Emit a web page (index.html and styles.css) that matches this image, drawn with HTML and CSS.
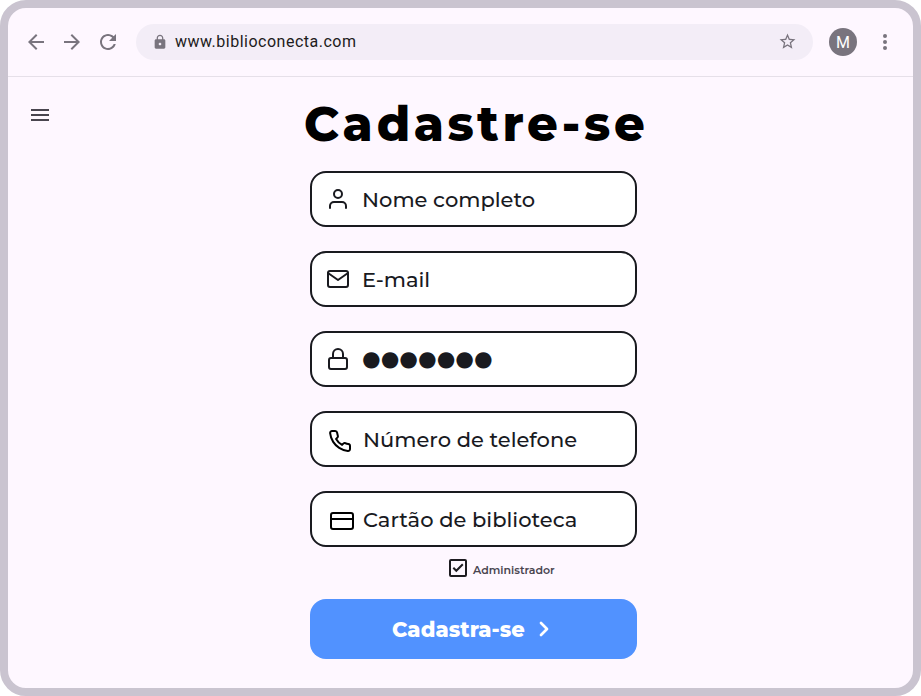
FILE: index.html
```html
<!DOCTYPE html>
<html lang="pt-BR">
<head>
<meta charset="utf-8">
<title>Cadastre-se</title>
<link rel="stylesheet" href="styles.css">
</head>
<body>
<div class="browser">
  <header class="toolbar">
    <svg class="nav" viewBox="0 0 24 24"><path d="M20 11H7.83l5.59-5.59L12 4l-8 8 8 8 1.41-1.41L7.83 13H20v-2z"/></svg>
    <svg class="nav" viewBox="0 0 24 24"><path d="M12 4l-1.41 1.41L16.17 11H4v2h12.17l-5.58 5.59L12 20l8-8z"/></svg>
    <svg class="nav" viewBox="0 0 24 24"><path d="M17.65 6.35C16.2 4.9 14.21 4 12 4c-4.42 0-7.99 3.58-7.99 8s3.57 8 7.99 8c3.73 0 6.84-2.55 7.73-6h-2.08c-.82 2.33-3.04 4-5.65 4-3.31 0-6-2.69-6-6s2.69-6 6-6c1.66 0 3.14.69 4.22 1.78L13 11h7V4l-2.35 2.35z"/></svg>
    <div class="address">
      <svg class="secure" viewBox="0 0 24 24"><path d="M18 8h-1V6c0-2.76-2.24-5-5-5S7 3.240 7 6v2H6c-1.100 0-2 .9-2 2v10c0 1.100.9 2 2 2h12c1.100 0 2-.9 2-2V10c0-1.100-.9-2-2-2zm-6 9c-1.100 0-2-.9-2-2s.9-2 2-2 2 .9 2 2-.9 2-2 2zm3.100-9H8.900V6c0-1.710 1.390-3.100 3.100-3.100s3.100 1.390 3.100 3.100v2z"/></svg>
      <span class="url">www.biblioconecta.com</span>
      <svg class="star" viewBox="0 0 24 24"><path d="M22 9.240l-7.190-.62L12 2 9.190 8.630 2 9.240l5.460 4.730L5.820 21 12 17.270 18.180 21l-1.630-7.030L22 9.240zM12 15.400l-3.760 2.270 1-4.280-3.320-2.880 4.380-.38L12 6.100l1.710 4.040 4.380.38-3.320 2.880 1 4.280L12 15.400z"/></svg>
    </div>
    <div class="avatar">M</div>
    <svg class="more" viewBox="0 0 24 24"><circle cx="12" cy="6" r="2"/><circle cx="12" cy="12" r="2"/><circle cx="12" cy="18" r="2"/></svg>
  </header>
  <main class="page">
    <svg class="menu" viewBox="0 0 24 24"><path d="M3 18h18v-2H3v2zm0-5h18v-2H3v2zm0-7v2h18V6H3z"/></svg>
    <form class="form">
      <h1><span class="title">Cadastre-se</span></h1>
      <div class="field">
        <svg class="icon" viewBox="0 0 24 24"><path d="M20 21v-2a4 4 0 0 0-4-4H8a4 4 0 0 0-4 4v2"/><circle cx="12" cy="7" r="4"/></svg>
        <span class="label name">Nome completo</span>
      </div>
      <div class="field">
        <svg class="icon" viewBox="0 0 24 24"><rect x="2" y="4" width="20" height="16" rx="2"/><path d="M22 6l-10 7L2 6"/></svg>
        <span class="label email">E-mail</span>
      </div>
      <div class="field">
        <svg class="icon" viewBox="0 0 24 24"><rect x="3" y="11" width="18" height="11" rx="2"/><path d="M7 11V7a5 5 0 0 1 10 0v4"/></svg>
        <span class="label password">●●●●●●●</span>
      </div>
      <div class="field phone-field">
        <svg class="icon" viewBox="0 0 24 24"><path d="M22 16.920v3a2 2 0 0 1-2.180 2 19.790 19.790 0 0 1-8.630-3.070 19.500 19.500 0 0 1-6-6 19.790 19.790 0 0 1-3.070-8.670A2 2 0 0 1 4.110 2h3a2 2 0 0 1 2 1.720 12.840 12.840 0 0 0 .7 2.810 2 2 0 0 1-.45 2.110L8.090 9.910a16 16 0 0 0 6 6l1.270-1.270a2 2 0 0 1 2.110-.45 12.840 12.840 0 0 0 2.810.7A2 2 0 0 1 22 16.920z"/></svg>
        <span class="label phone">Número de telefone</span>
      </div>
      <div class="field card-field">
        <svg class="icon" viewBox="0 0 24 24"><rect x="1" y="4" width="22" height="16" rx="2"/><path d="M1 10h22"/></svg>
        <span class="label card">Cartão de biblioteca</span>
      </div>
      <div class="admin">
        <svg class="check" viewBox="0 0 18 18"><rect x="1" y="1" width="16" height="16" rx="1"/><path d="M4.300 8.800l3 3 6.500-6.500"/></svg>
        <span class="admin-label">Administrador</span>
      </div>
      <div class="submit">
        <span class="submit-label">Cadastra-se</span>
        <svg class="chevron" viewBox="0 0 10 16"><path d="M2 2l6 6-6 6"/></svg>
      </div>
    </form>
  </main>
</div>
</body>
</html>
```
FILE: styles.css
```css
* { box-sizing: border-box; }
body { margin: 0; background: #fff; font-family: Montserrat, Inter, sans-serif; }
svg { display: block; flex: none; }
.browser {
  width: 921px; height: 696px;
  border: 8px solid #cac4d0; border-radius: 26px;
  background: #fef7ff; overflow: hidden;
}
.toolbar {
  display: flex; align-items: center; height: 69px;
  padding-left: 16px; border-bottom: 1px solid #e6e0e9;
  fill: #79747e; font-family: Roboto, sans-serif;
}
.nav { width: 24px; height: 24px; margin-right: 12px; }
.address {
  display: flex; align-items: center; width: 677px; height: 36px;
  margin-left: 4px; padding: 0 16px; border-radius: 18px; background: #f3edf7;
}
.secure { width: 16px; height: 16px; margin-right: 7px; }
.url { font-size: 16px; line-height: 24px; letter-spacing: 0.5px; color: #1d1b20; }
.star { width: 19px; height: 19px; margin: 0 0.500px 1px auto; }
.avatar {
  width: 28px; height: 28px; margin-left: 16px; border-radius: 50%;
  background: #79747e; color: #fff; font-size: 16px; line-height: 29px; text-align: center;
}
.more { width: 24px; height: 24px; margin-left: 16px; }
.page { display: flex; height: 611px; }
.menu { width: 24px; height: 24px; margin: 26px 258px 0 20px; fill: #49454f; }
.form { width: 327px; }
h1 { height: 94px; margin: 0 -20px 0 -6px; padding-top: 19px; line-height: 56px; font-size: 48px; font-weight: 800; color: #000; white-space: nowrap; }
.title { letter-spacing: 3.600px; }
.field {
  display: flex; align-items: center; gap: 12px; height: 56px; margin-bottom: 24px;
  padding: 0 14px; border: 2px solid #191a1f; border-radius: 16px; background: #fff;
}
.icon { width: 24px; height: 24px; fill: none; stroke: #191a1f; stroke-width: 2; stroke-linecap: round; stroke-linejoin: round; }
.label { padding-top: 2px; font-size: 21px; font-weight: 500; line-height: 28px; color: #191a1f; white-space: nowrap; }
.password { padding: 0 0 1px; font-family: "DejaVu Sans", sans-serif; font-size: 21.400px; }
.phone-field { padding-left: 16px; gap: 11px; }
.phone-field .icon, .card-field .icon { stroke: #000; margin-top: 4px; }
.card-field { padding-left: 18px; gap: 9px; margin-bottom: 12px; }
.admin { display: flex; align-items: center; height: 18px; margin: 0 0 22px 139px; gap: 6px; }
.check { width: 18px; height: 18px; fill: none; stroke: #1d1b20; stroke-width: 2; }
.admin-label { font-size: 11px; font-weight: 600; line-height: 16px; color: #49454f; padding-top: 3px; }
.submit { display: flex; align-items: center; height: 60px; padding-left: 82px; border-radius: 16px; background: #5192ff; color: #fff; }
.submit-label { padding-top: 2px; font-size: 21px; line-height: 28px; font-weight: 800; white-space: nowrap; width: 147px; letter-spacing: 0.050px; }
.chevron { width: 10px; height: 16px; fill: none; stroke: #fff; stroke-width: 2.700; stroke-linecap: round; stroke-linejoin: round; }
```
